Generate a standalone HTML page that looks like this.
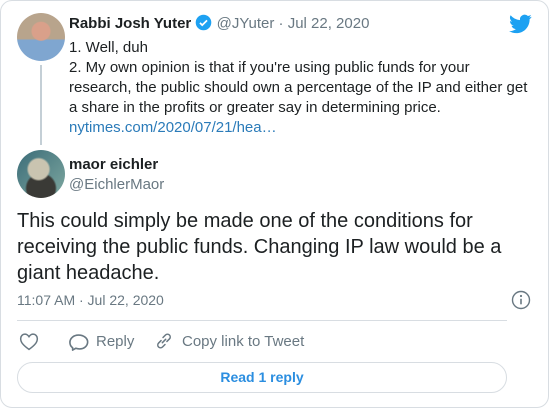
<!DOCTYPE html>
<html><head><style>
body{margin:0;width:550px;height:410px;background:#fff;font-family:"Liberation Sans",sans-serif;position:relative;overflow:hidden}
.card{position:absolute;left:0;top:0;width:547px;height:406px;border:1px solid #d8dde2;border-radius:12px}
.a{position:absolute}
.t{color:#1c2022;font-size:15px;white-space:nowrap}
</style></head><body>
<div class="card"></div>
<div class="a" style="left:17px;top:13px;width:48px;height:48px;border-radius:50%;background:radial-gradient(circle at 50% 38%,#d9a08a 0 9px,transparent 10px),linear-gradient(#b8a48c 0 55%,#7fa6d0 55%)"></div>
<div class="a" style="left:40px;top:65px;width:2px;height:80px;background:#c4cfd6"></div>
<div class="a t" style="left:69px;top:14px;line-height:20px"><b>Rabbi Josh Yuter</b> <svg width="17" height="17" viewBox="0 0 24 24" style="vertical-align:-3px"><circle cx="12" cy="12" r="11" fill="#1da1f2"/><path d="M7 12.5l3.2 3.2L17 9" stroke="#fff" stroke-width="2.4" fill="none"/></svg> <span style="color:#697882">@JYuter · Jul 22, 2020</span></div>
<div class="a t" style="left:69px;top:38px;line-height:20px">1. Well, duh<br>2. My own opinion is that if you're using public funds for your<br>research, the public should own a percentage of the IP and either get<br>a share in the profits or greater say in determining price.<br><span style="color:#2b7bb9">nytimes.com/2020/07/21/hea…</span></div>
<svg class="a" style="left:509px;top:14px" width="23" height="20" viewBox="0 0 24 20"><path fill="#1da1f2" d="M23.6 2.4c-.9.4-1.8.6-2.8.8 1-.6 1.8-1.600 2.1-2.7-1 .6-2 1-3.1 1.2A4.9 4.9 0 0 0 11.5 6 13.9 13.9 0 0 1 1.7.9a4.9 4.9 0 0 0 1.5 6.6c-.8 0-1.6-.3-2.2-.6 0 2.4 1.7 4.4 3.9 4.8-.7.2-1.5.2-2.2.1.6 2 2.4 3.4 4.6 3.4A9.9 9.9 0 0 1 0 17.3 14 14 0 0 0 7.5 19.5c9.1 0 14-7.5 14-14v-.6c1-.7 1.8-1.6 2.1-2.5z"/></svg>
<div class="a" style="left:17px;top:150px;width:48px;height:48px;border-radius:50%;background:radial-gradient(circle at 45% 40%,#c9c4b0 0 10px,transparent 12px),radial-gradient(circle at 50% 80%,#3a3a36 0 14px,transparent 16px),linear-gradient(135deg,#3b6c78,#7ea8a0)"></div>
<div class="a t" style="left:69px;top:156px;font-weight:bold">maor eichler</div>
<div class="a t" style="left:69px;top:176px;color:#697882">@EichlerMaor</div>
<div class="a t" style="left:17px;top:208px;font-size:20px;line-height:26px">This could simply be made one of the conditions for<br>receiving the public funds. Changing IP law would be a<br>giant headache.</div>
<div class="a t" style="left:17px;top:292px;color:#697882;font-size:14px">11:07 AM · Jul 22, 2020</div>
<svg class="a" style="left:511px;top:290px" width="20" height="20" viewBox="0 0 20 20"><circle cx="10" cy="10" r="8.5" stroke="#697882" stroke-width="1.4" fill="none"/><circle cx="10" cy="6" r="1.1" fill="#697882"/><path d="M10 8.8v5.5" stroke="#697882" stroke-width="1.6"/></svg>
<div class="a" style="left:17px;top:320px;width:490px;height:1px;background:#d8dde2"></div>
<svg class="a" style="left:19px;top:332px" width="20" height="19" viewBox="0 0 24 22"><path d="M12 20.5C5 15.5 2 12 2 7.5 2 4.5 4.3 2.2 7 2.2c2 0 3.6 1 5 3 1.4-2 3-3 5-3 2.7 0 5 2.3 5 5.3 0 4.5-3 8-10 13z" stroke="#697882" stroke-width="1.8" fill="none"/></svg>
<svg class="a" style="left:68px;top:331px" width="22" height="20" viewBox="0 0 24 22"><path d="M5 18.5c-2-1.5-3-3.6-3-6 0-4.5 4-8 9.5-8s10 3.3 10 7.6c0 4.4-4 7.6-9 7.6-1.5 0-2.8-.2-4-.7L5 21z" stroke="#697882" stroke-width="1.8" fill="none" stroke-linejoin="round"/></svg>
<div class="a t" style="left:96px;top:333px;color:#697882;font-size:15px">Reply</div>
<svg class="a" style="left:154px;top:331px" width="20" height="20" viewBox="0 0 24 24"><path d="M10 14l4-4M8.5 11.5l-3 3a3.3 3.3 0 0 0 4.7 4.7l3-3M15.5 12.5l3-3a3.3 3.3 0 0 0-4.7-4.7l-3 3" stroke="#697882" stroke-width="1.8" fill="none" stroke-linecap="round"/></svg>
<div class="a t" style="left:182px;top:333px;color:#697882;font-size:15px">Copy link to Tweet</div>
<div class="a" style="left:17px;top:362px;width:488px;height:29px;border:1px solid #d8dde2;border-radius:16px;text-align:center;line-height:29px;color:#2b8ee0;font-weight:bold;font-size:14px">Read 1 reply</div>
</body></html>
